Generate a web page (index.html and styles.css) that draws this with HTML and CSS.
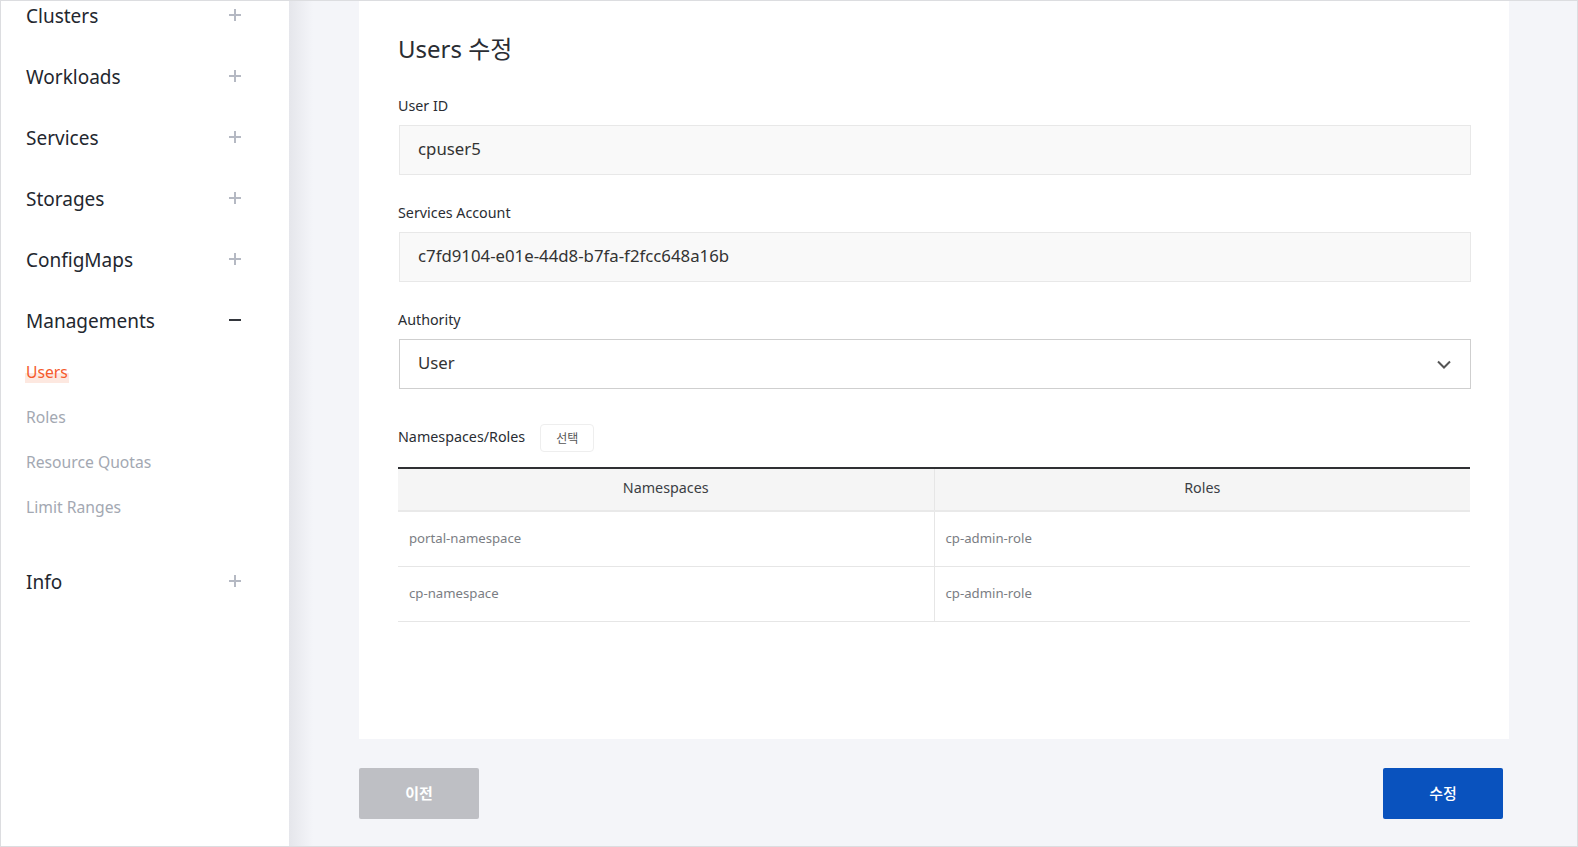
FILE: index.html
```html
<!DOCTYPE html>
<html lang="ko">
<head>
<meta charset="utf-8">
<title>Users 수정</title>
<link rel="stylesheet" href="styles.css">
</head>
<body>
<div class="frame">
  <aside class="sidebar">
    <ul class="menu">
      <li class="menu-item"><span>Clusters</span><span class="ico plus"></span></li>
      <li class="menu-item"><span>Workloads</span><span class="ico plus"></span></li>
      <li class="menu-item"><span>Services</span><span class="ico plus"></span></li>
      <li class="menu-item"><span>Storages</span><span class="ico plus"></span></li>
      <li class="menu-item"><span>ConfigMaps</span><span class="ico plus"></span></li>
      <li class="menu-item"><span>Managements</span><span class="ico minus"></span></li>
    </ul>
    <ul class="submenu">
      <li class="sub-item active"><span>Users</span></li>
      <li class="sub-item"><span>Roles</span></li>
      <li class="sub-item"><span>Resource Quotas</span></li>
      <li class="sub-item"><span>Limit Ranges</span></li>
    </ul>
    <ul class="menu">
      <li class="menu-item"><span>Info</span><span class="ico plus"></span></li>
    </ul>
  </aside>
  <main class="main">
    <section class="card">
      <h1 class="title">Users 수정</h1>
      <div class="field">
        <div class="label">User ID</div>
        <div class="input">cpuser5</div>
      </div>
      <div class="field">
        <div class="label">Services Account</div>
        <div class="input">c7fd9104-e01e-44d8-b7fa-f2fcc648a16b</div>
      </div>
      <div class="field">
        <div class="label">Authority</div>
        <div class="select"><span>User</span>
          <svg class="chev" width="14" height="9" viewBox="0 0 14 9"><path d="M1 1.5 L7 7.5 L13 1.5" fill="none" stroke="#555" stroke-width="2"/></svg>
        </div>
      </div>
      <div class="ns-row">
        <span class="label-inline">Namespaces/Roles</span>
        <span class="pick-btn">선택</span>
      </div>
      <table class="grid">
        <thead>
          <tr><th>Namespaces</th><th>Roles</th></tr>
        </thead>
        <tbody>
          <tr><td>portal-namespace</td><td>cp-admin-role</td></tr>
          <tr><td>cp-namespace</td><td>cp-admin-role</td></tr>
        </tbody>
      </table>
    </section>
    <div class="actions">
      <button class="btn btn-prev">이전</button>
      <button class="btn btn-edit">수정</button>
    </div>
  </main>
</div>
</body>
</html>
```

FILE: styles.css
```css
* { box-sizing: border-box; }
html, body { margin: 0; padding: 0; }
body {
  font-family: "Noto Sans", "Noto Sans CJK KR", sans-serif;
  color: #222;
  background: #fff;
}
ul { list-style: none; margin: 0; padding: 0; }

.frame {
  width: 1578px;
  height: 847px;
  border: 1px solid #dcdde0;
  display: flex;
  overflow: hidden;
}

/* Sidebar */
.sidebar {
  width: 288px;
  flex: 0 0 288px;
  background: #fff;
  padding-left: 25px;
  overflow: hidden;
}
.sidebar > .menu:first-child { margin-top: -16px; }
.menu-item {
  height: 61px;
  display: flex;
  align-items: center;
  justify-content: space-between;
  padding-right: 48px;
  font-size: 19px;
  color: #23272f;
}
.ico {
  position: relative;
  width: 12px;
  height: 12px;
  display: inline-block;
  margin-top: -2px;
}
.ico::before, .ico::after {
  content: "";
  position: absolute;
  background: #b5b9c3;
}
.ico.plus::before { left: 0; top: 5px; width: 12px; height: 2px; }
.ico.plus::after { left: 5px; top: 0; width: 2px; height: 12px; }
.ico.minus::before { left: 0; top: 5px; width: 12px; height: 2px; background: #33363c; }
.ico.minus::after { display: none; }

.submenu {
  margin-top: -2px;
  padding-bottom: 22px;
}
.sub-item {
  height: 45px;
  display: flex;
  align-items: center;
  font-size: 15.7px;
  color: #a3a8b2;
}
.sub-item.active span {
  color: #f55a2c;
  background: linear-gradient(to bottom, transparent 55%, #fde8e0 55%);
  padding: 0 1px;
  margin-left: -1px;
}

/* Main */
.main {
  flex: 1;
  background: linear-gradient(to right, #e5e6eb 0, #f4f5f9 24px);
  padding-left: 70px;
  display: flex;
  flex-direction: column;
}
.card {
  width: 1150px;
  height: 738px;
  background: #fff;
  padding: 30px 38px 0 40px;
}
.title {
  margin: 0 0 29px -1px;
  font-size: 24px;
  line-height: 36px;
  font-weight: 400;
  color: #2a2d33;
  padding-bottom: 2px;
  height: 36px;
}
.field { margin-bottom: 28px; }
.label {
  font-size: 14.3px;
  line-height: 20px;
  height: 20px;
  color: #2a2d33;
  margin: 0 0 9px -1px;
  padding-bottom: 2px;
}
.input {
  height: 50px;
  border: 1px solid #e8e8e8;
  background: #f9f9f9;
  display: flex;
  align-items: center;
  padding: 0 0 3px 18px;
  font-size: 16.8px;
  color: #333;
}
.select {
  height: 50px;
  border: 1px solid #cfcfcf;
  background: #fff;
  display: flex;
  align-items: center;
  justify-content: space-between;
  padding: 0 19px 0 18px;
  font-size: 16.8px;
  color: #333;
}
.select span { padding-bottom: 3px; }
.field:nth-of-type(3) { margin-bottom: 35px; }

.ns-row {
  height: 28px;
  display: flex;
  align-items: center;
  gap: 15px;
  margin: 0 0 15px -1px;
}
.label-inline { font-size: 14.3px; color: #2a2d33; padding-bottom: 4px; }
.pick-btn {
  width: 54px;
  height: 28px;
  border: 1px solid #eeeeee;
  border-radius: 4px;
  display: flex;
  align-items: center;
  justify-content: center;
  font-size: 12px;
  color: #555;
  font-family: "Noto Sans CJK KR", sans-serif;
  padding-bottom: 2px;
}

.grid {
  width: 1072px;
  margin-left: -1px;
  border-collapse: collapse;
  table-layout: fixed;
  border-top: 2px solid #2f3033;
}
.grid th {
  height: 43px;
  background: #f5f5f5;
  border-bottom: 2px solid #e9e9e9;
  font-weight: 400;
  font-size: 14.3px;
  color: #3b3e44;
  text-align: center;
  padding: 0 0 4px;
}
.grid th + th, .grid td + td { border-left: 1px solid #e6e6e6; }
.grid td {
  height: 55px;
  border-bottom: 1px solid #e6e6e6;
  padding: 0 0 2px 11px;
  font-size: 13.2px;
  color: #7a7d83;
}

.actions {
  margin-top: 29px;
  width: 1144px;
  display: flex;
  justify-content: space-between;
}
.btn {
  width: 120px;
  height: 51px;
  border: 0;
  border-radius: 2px;
  color: #fff;
  font-family: "Noto Sans CJK KR", sans-serif;
  font-size: 15px;
  font-weight: 700;
  padding: 0 0 2px;
}
.btn-prev { background: #bebfc4; }
.btn-edit { background: #0952be; font-weight: 500; }
```
